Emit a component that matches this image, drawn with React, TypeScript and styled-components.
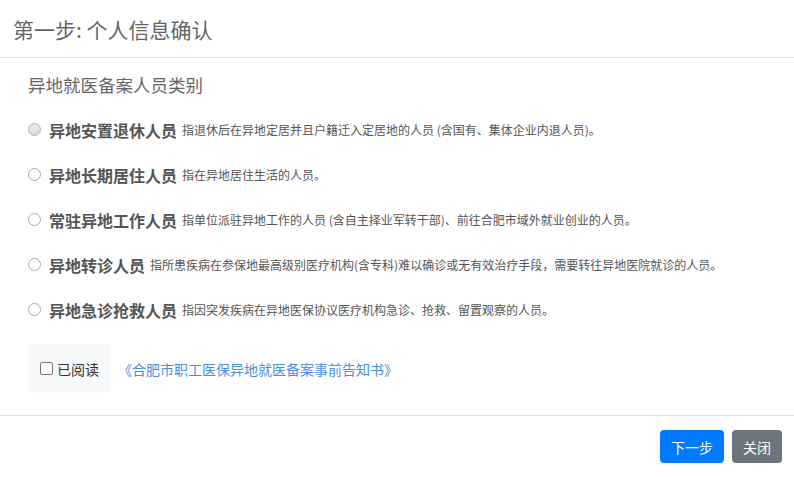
import React from "react";
import styled, { createGlobalStyle } from "styled-components";

const GlobalStyle = createGlobalStyle`
  html, body {
    margin: 0;
    padding: 0;
    background: #ffffff;
  }
  body {
    font-family: "Noto Sans CJK SC", "Noto Sans", "Liberation Sans", sans-serif;
    color: #555;
  }
`;

const Modal = styled.div`
  width: 794px;
  height: 478px;
  display: flex;
  flex-direction: column;
  background: #fff;
`;

const Header = styled.div`
  height: 57px;
  border-bottom: 1px solid #dee2e6;
  display: flex;
  align-items: center;
  padding-left: 13px;
`;

const Title = styled.h5`
  margin: 0;
  font-size: 21px;
  font-weight: 400;
  color: #666;
  line-height: 24px;
`;

const Body = styled.div`
  flex: 1;
  padding: 15px 28px 22px;
  display: flex;
  flex-direction: column;
`;

const SubTitle = styled.div`
  font-size: 17.5px;
  line-height: 24px;
  color: #666;
`;

const OptionList = styled.div`
  margin-top: 10px;
  display: flex;
  flex-direction: column;
`;

const OptionRow = styled.label`
  height: 45px;
  display: flex;
  align-items: center;
  cursor: pointer;
`;

const Radio = styled.span<{ $hover?: boolean }>`
  width: 13px;
  height: 13px;
  box-sizing: border-box;
  border-radius: 50%;
  border: 1px solid ${(props) => (props.$hover ? "#b5b5b5" : "#a9a9a9")};
  background: ${(props) =>
    props.$hover ? "linear-gradient(#eaeaea, #dcdcdc)" : "#fff"};
  flex-shrink: 0;
  margin-right: 8px;
`;

const OptionName = styled.span`
  font-size: 16px;
  font-weight: 700;
  color: #555;
  line-height: 22px;
`;

const OptionDesc = styled.span`
  font-size: 12px;
  color: #555;
  margin-left: 5px;
  line-height: 18px;
`;

const ReadRow = styled.div`
  margin-top: 12px;
  display: flex;
  align-items: center;
`;

const ReadBox = styled.label`
  height: 49px;
  box-sizing: border-box;
  padding: 0 10px 0 12px;
  background: #f8f9fa;
  display: flex;
  align-items: center;
  font-size: 14px;
  color: #333;
`;

const CheckBox = styled.span`
  width: 13px;
  height: 13px;
  box-sizing: border-box;
  border: 1px solid #767676;
  border-radius: 2px;
  background: #fff;
  margin-right: 4px;
`;

const NoticeLink = styled.a`
  margin-left: 9px;
  font-size: 14px;
  color: #4a8ee0;
  text-decoration: none;
`;

const Footer = styled.div`
  border-top: 1px solid #dee2e6;
  padding: 14px 12px 15px;
  display: flex;
  justify-content: flex-end;
  gap: 8px;
`;

const Button = styled.button<{ $primary?: boolean }>`
  height: 33px;
  padding: 0 11px;
  border: none;
  border-radius: 4px;
  font-family: inherit;
  font-size: 14px;
  color: #fff;
  background: ${(props) => (props.$primary ? "#007bff" : "#6c757d")};
  cursor: pointer;
`;

const options = [
  {
    name: "异地安置退休人员",
    desc: "指退休后在异地定居并且户籍迁入定居地的人员 (含国有、集体企业内退人员)。",
  },
  { name: "异地长期居住人员", desc: "指在异地居住生活的人员。" },
  {
    name: "常驻异地工作人员",
    desc: "指单位派驻异地工作的人员 (含自主择业军转干部)、前往合肥市域外就业创业的人员。",
  },
  {
    name: "异地转诊人员",
    desc: "指所患疾病在参保地最高级别医疗机构(含专科)难以确诊或无有效治疗手段，需要转往异地医院就诊的人员。",
  },
  {
    name: "异地急诊抢救人员",
    desc: "指因突发疾病在异地医保协议医疗机构急诊、抢救、留置观察的人员。",
  },
];

export default function App() {
  return (
    <>
      <GlobalStyle />
      <Modal>
        <Header>
          <Title>第一步: 个人信息确认</Title>
        </Header>
        <Body>
          <SubTitle>异地就医备案人员类别</SubTitle>
          <OptionList>
            {options.map((opt, i) => (
              <OptionRow key={opt.name}>
                <Radio $hover={i === 0} />
                <OptionName>{opt.name}</OptionName>
                <OptionDesc>{opt.desc}</OptionDesc>
              </OptionRow>
            ))}
          </OptionList>
          <ReadRow>
            <ReadBox>
              <CheckBox />
              已阅读
            </ReadBox>
            <NoticeLink href="#">《合肥市职工医保异地就医备案事前告知书》</NoticeLink>
          </ReadRow>
        </Body>
        <Footer>
          <Button $primary>下一步</Button>
          <Button>关闭</Button>
        </Footer>
      </Modal>
    </>
  );
}
